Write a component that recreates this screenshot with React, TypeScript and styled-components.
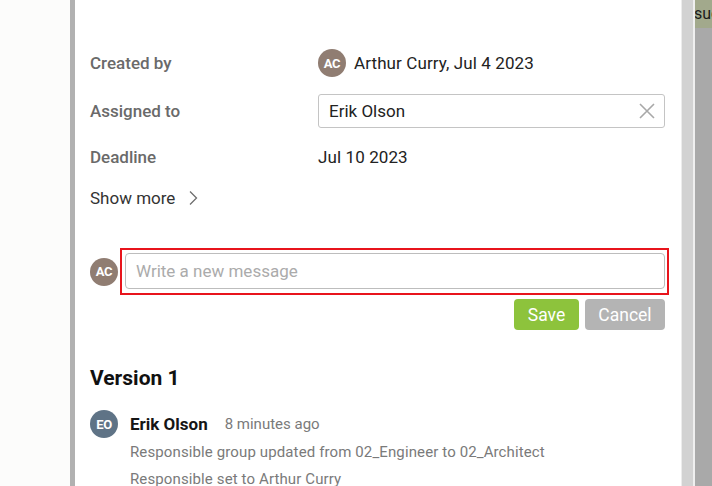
import React from "react";
import styled, { createGlobalStyle } from "styled-components";

const Global = createGlobalStyle`
  html, body { margin: 0; padding: 0; overflow: hidden; }
  body { font-family: Roboto, "Liberation Sans", Arial, sans-serif; background: #fcfcfb; }
  * { box-sizing: border-box; }
`;

const Page = styled.div`
  display: flex;
  width: 712px;
  height: 486px;
  overflow: hidden;
`;

const Backdrop = styled.div`
  width: 70px;
  flex: none;
  background: #fcfcfb;
`;

const Divider = styled.div`
  width: 5px;
  flex: none;
  background: #b1b1b1;
`;

const Panel = styled.div`
  width: 606px;
  flex: none;
  background: #ffffff;
  padding: 49px 16px 0 15px;
  display: flex;
  flex-direction: column;
`;

const Fields = styled.div`
  display: grid;
  grid-template-columns: 228px 1fr;
  grid-template-rows: 28px 34px 24px 24px;
  row-gap: 17px;
  align-items: center;
`;

const Label = styled.div`
  font-size: 17px;
  color: #6a6a6a;
  font-weight: 500;
`;

const Value = styled.div`
  display: flex;
  align-items: center;
  gap: 8px;
  font-size: 17px;
  color: #222;
  letter-spacing: 0.1px;
`;

const Avatar = styled.div<{ $bg: string }>`
  width: 28px;
  height: 28px;
  flex: none;
  border-radius: 50%;
  background: ${(p) => p.$bg};
  color: #fff;
  font-size: 13px;
  font-weight: 700;
  display: flex;
  align-items: center;
  justify-content: center;
  letter-spacing: -0.4px;
`;

const Select = styled.div`
  height: 34px;
  border: 1px solid #c4c4c4;
  border-radius: 3px;
  display: flex;
  align-items: center;
  justify-content: space-between;
  padding: 0 8px 0 10px;
  font-size: 17px;
  color: #222;
`;

const ShowMore = styled.div`
  grid-column: 1 / -1;
  display: flex;
  align-items: center;
  gap: 13px;
  font-size: 17px;
  color: #333;
`;

const CommentRow = styled.div`
  margin-top: 38px;
  display: flex;
  align-items: center;
  gap: 2px;
  margin-right: -4px;
`;

const Highlight = styled.div`
  flex: 1;
  border: 2px solid #e8141c;
  padding: 3px 2px 4px 3px;
`;

const MessageInput = styled.div`
  height: 36px;
  border: 1px solid #bdbdbd;
  border-radius: 4px;
  display: flex;
  align-items: center;
  padding: 0 10px;
  font-size: 17px;
  color: #ababab;
`;

const Buttons = styled.div`
  margin-top: 4px;
  display: flex;
  justify-content: flex-end;
  gap: 6px;
`;

const Button = styled.div<{ $bg: string; $w: number }>`
  width: ${(p) => p.$w}px;
  height: 31px;
  border-radius: 4px;
  background: ${(p) => p.$bg};
  color: #fff;
  font-size: 17.5px;
  display: flex;
  align-items: center;
  justify-content: center;
`;

const Heading = styled.div`
  margin-top: 36px;
  font-size: 21px;
  line-height: 24px;
  font-weight: 700;
  color: #111;
`;

const EntryHead = styled.div`
  margin-top: 20px;
  display: flex;
  align-items: center;
`;

const Name = styled.span`
  margin-left: 12px;
  font-size: 17px;
  font-weight: 700;
  color: #151515;
`;

const Time = styled.span`
  margin-left: 17px;
  font-size: 15px;
  color: #7a7a7a;
`;

const Change = styled.div`
  padding-left: 40px;
  font-size: 15px;
  line-height: 27px;
  color: #7a7a7a;
  letter-spacing: 0.12px;
  white-space: nowrap;
`;

const Changes = styled.div`
  margin-top: 1px;
`;

const EdgeLight = styled.div`
  width: 1px;
  flex: none;
  background: #ececec;
`;

const EdgeGray = styled.div`
  width: 11px;
  flex: none;
  background: #d2d2d2;
`;

const EdgeLine = styled.div`
  width: 2px;
  flex: none;
  background: #efefef;
`;

const Behind = styled.div`
  flex: 1;
  background: #a9a9a9;
  display: flex;
  flex-direction: column;
  overflow: hidden;
`;

const BehindHeader = styled.div`
  height: 28px;
  background: #a2a98c;
  font-size: 16px;
  color: #1a1a1a;
  white-space: nowrap;
  padding-top: 4px;
  text-indent: -1px;
  overflow: hidden;
`;

const XIcon = () => (
  <svg width="18" height="18" viewBox="0 0 18 18" fill="none">
    <path d="M2 2L16 16M16 2L2 16" stroke="#a8a8a8" strokeWidth="1.6" />
  </svg>
);

const Chevron = () => (
  <svg width="10" height="16" viewBox="0 0 10 16" fill="none">
    <path d="M2 1.5L8.5 8L2 14.5" stroke="#6e6e6e" strokeWidth="1.3" />
  </svg>
);

export default function App() {
  return (
    <>
      <Global />
      <Page>
        <Backdrop />
        <Divider />
        <Panel>
          <Fields>
            <Label>Created by</Label>
            <Value>
              <Avatar $bg="#907d72">AC</Avatar>
              Arthur Curry, Jul 4 2023
            </Value>
            <Label>Assigned to</Label>
            <Select>
              Erik Olson
              <XIcon />
            </Select>
            <Label>Deadline</Label>
            <Value>Jul 10 2023</Value>
            <ShowMore>
              Show more
              <Chevron />
            </ShowMore>
          </Fields>
          <CommentRow>
            <Avatar $bg="#907d72">AC</Avatar>
            <Highlight>
              <MessageInput>Write a new message</MessageInput>
            </Highlight>
          </CommentRow>
          <Buttons>
            <Button $bg="#8dc33c" $w={65}>Save</Button>
            <Button $bg="#b4b4b4" $w={80}>Cancel</Button>
          </Buttons>
          <Heading>Version 1</Heading>
          <EntryHead>
            <Avatar $bg="#5f7386">EO</Avatar>
            <Name>Erik Olson</Name>
            <Time>8 minutes ago</Time>
          </EntryHead>
          <Changes>
            <Change>Responsible group updated from 02_Engineer to 02_Architect</Change>
            <Change>Responsible set to Arthur Curry</Change>
          </Changes>
        </Panel>
        <EdgeLight />
        <EdgeGray />
        <EdgeLine />
        <Behind>
          <BehindHeader>sue</BehindHeader>
        </Behind>
      </Page>
    </>
  );
}
